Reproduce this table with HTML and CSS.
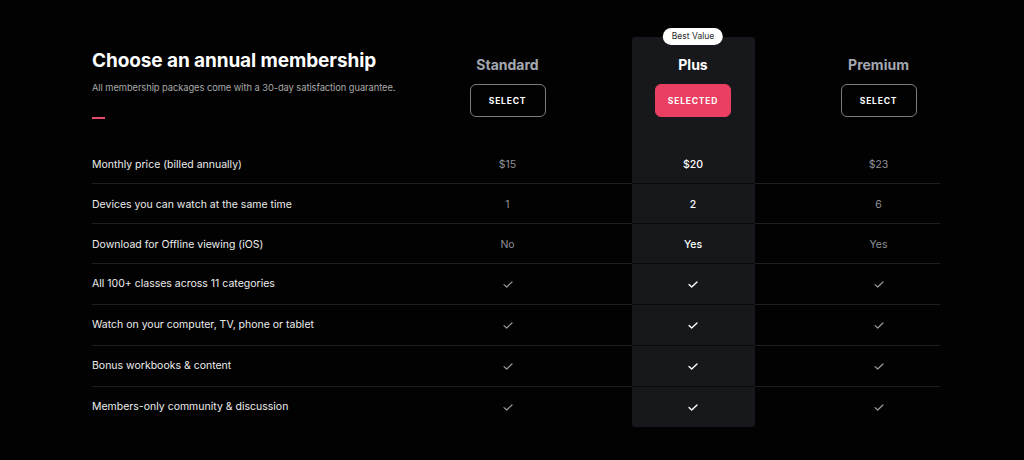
FILE: index.html
```html
<!DOCTYPE html>
<html lang="en">
<head>
<meta charset="utf-8">
<title>Choose an annual membership</title>
<link rel="stylesheet" href="styles.css">
</head>
<body>
<main class="pricing">
  <div class="row head-row">
    <div class="intro">
      <h1 class="title">Choose an annual membership</h1>
      <p class="subtitle">All membership packages come with a 30-day satisfaction guarantee.</p>
      <span class="accent"></span>
    </div>
    <div class="plan">
      <h2 class="plan-name">Standard</h2>
      <button class="btn">SELECT</button>
    </div>
    <div class="plan plus first">
      <span class="badge">Best Value</span>
      <h2 class="plan-name">Plus</h2>
      <button class="btn btn-selected">SELECTED</button>
    </div>
    <div class="plan">
      <h2 class="plan-name">Premium</h2>
      <button class="btn">SELECT</button>
    </div>
  </div>

  <div class="row text-row">
    <div class="label">Monthly price (billed annually)</div>
    <div class="val">$15</div>
    <div class="val plus">$20</div>
    <div class="val">$23</div>
  </div>
  <div class="row text-row">
    <div class="label">Devices you can watch at the same time</div>
    <div class="val">1</div>
    <div class="val plus">2</div>
    <div class="val">6</div>
  </div>
  <div class="row text-row">
    <div class="label">Download for Offline viewing (iOS)</div>
    <div class="val">No</div>
    <div class="val plus">Yes</div>
    <div class="val">Yes</div>
  </div>
  <div class="row check-row">
    <div class="label">All 100+ classes across 11 categories</div>
    <div class="val"><svg class="check" viewBox="0 0 10 7"><path d="M1 3.6 3.7 6 9 1"/></svg></div>
    <div class="val plus"><svg class="check" viewBox="0 0 10 7"><path d="M1 3.6 3.7 6 9 1"/></svg></div>
    <div class="val"><svg class="check" viewBox="0 0 10 7"><path d="M1 3.6 3.7 6 9 1"/></svg></div>
  </div>
  <div class="row check-row">
    <div class="label">Watch on your computer, TV, phone or tablet</div>
    <div class="val"><svg class="check" viewBox="0 0 10 7"><path d="M1 3.6 3.7 6 9 1"/></svg></div>
    <div class="val plus"><svg class="check" viewBox="0 0 10 7"><path d="M1 3.6 3.7 6 9 1"/></svg></div>
    <div class="val"><svg class="check" viewBox="0 0 10 7"><path d="M1 3.6 3.7 6 9 1"/></svg></div>
  </div>
  <div class="row check-row">
    <div class="label">Bonus workbooks &amp; content</div>
    <div class="val"><svg class="check" viewBox="0 0 10 7"><path d="M1 3.6 3.7 6 9 1"/></svg></div>
    <div class="val plus"><svg class="check" viewBox="0 0 10 7"><path d="M1 3.6 3.7 6 9 1"/></svg></div>
    <div class="val"><svg class="check" viewBox="0 0 10 7"><path d="M1 3.6 3.7 6 9 1"/></svg></div>
  </div>
  <div class="row check-row last-row">
    <div class="label">Members-only community &amp; discussion</div>
    <div class="val"><svg class="check" viewBox="0 0 10 7"><path d="M1 3.6 3.7 6 9 1"/></svg></div>
    <div class="val plus last"><svg class="check" viewBox="0 0 10 7"><path d="M1 3.6 3.7 6 9 1"/></svg></div>
    <div class="val"><svg class="check" viewBox="0 0 10 7"><path d="M1 3.6 3.7 6 9 1"/></svg></div>
  </div>
</main>
</body>
</html>
```

FILE: styles.css
```css
* { box-sizing: border-box; }
html, body { margin: 0; padding: 0; }
body {
  background: #020202;
  color: #ededed;
  font-family: Inter, "Liberation Sans", sans-serif;
  width: 1024px;
  height: 460px;
  overflow: hidden;
}
.pricing {
  width: 848px;
  margin: 37px 0 0 92px;
}
.row {
  display: grid;
  grid-template-columns: minmax(0, 1fr) 123px 123px 123px;
  column-gap: 62.5px;
  border-bottom: 1px solid #1f1f22;
  height: 40px;
}
.head-row {
  height: 107px;
  border-bottom: none;
}
.text-row .label,
.text-row .val { padding-top: 2px; }
.check-row { height: 41px; }
.check-row .label { padding-bottom: 2px; }
.last-row { border-bottom: none; height: 40px; }
.intro {
  padding-top: 12px;
  white-space: nowrap;
  min-width: 0;
}
.title {
  margin: 0;
  font-size: 19px;
  font-weight: 700;
  line-height: 24px;
  color: #ffffff;
  letter-spacing: -0.1px;
}
.subtitle {
  margin: 8px 0 0;
  font-size: 9.3px;
  line-height: 13px;
  color: #a9a9a9;
  letter-spacing: -0.05px;
}
.accent {
  display: block;
  width: 13px;
  height: 2px;
  margin-top: 23px;
  background: #e8486b;
}
.plan {
  display: flex;
  flex-direction: column;
  align-items: center;
  padding-top: 19px;
  position: relative;
}
.plan-name {
  margin: 0;
  font-size: 14px;
  line-height: 18px;
  font-weight: 700;
  color: #a3a7b0;
}
.plus .plan-name { color: #ffffff; }
.btn {
  margin-top: 10px;
  width: 76px;
  height: 33px;
  border: 1px solid #7c7c80;
  border-radius: 6px;
  background: transparent;
  color: #ffffff;
  font-family: inherit;
  font-size: 8.5px;
  font-weight: 700;
  letter-spacing: 0.8px;
  padding: 0;
}
.btn-selected {
  background: #ea3e62;
  border-color: #ea3e62;
}
.plus {
  background: #17181b;
  box-shadow: 0 1px 0 #0a0a0b;
}
.plus.first { border-radius: 3px 3px 0 0; box-shadow: none; }
.plus.last { border-radius: 0 0 3px 3px; box-shadow: none; }
.badge {
  position: absolute;
  top: -9px;
  left: 50%;
  transform: translateX(-50%);
  background: #ffffff;
  color: #2a2a2a;
  font-size: 8.5px;
  line-height: 17px;
  padding: 0 9px;
  border-radius: 9px;
  white-space: nowrap;
}
.label {
  display: flex;
  align-items: center;
  font-size: 10.5px;
  color: #ececec;
}
.val {
  display: flex;
  align-items: center;
  justify-content: center;
  font-size: 10.5px;
  color: #8f9196;
}
.val.plus { color: #ffffff; font-weight: 500; }
.check {
  width: 10px;
  height: 7px;
  fill: none;
  stroke: #9a9a9e;
  stroke-width: 1.2;
  stroke-linecap: round;
  stroke-linejoin: round;
}
.plus .check { stroke: #ffffff; stroke-width: 1.4; }
```
